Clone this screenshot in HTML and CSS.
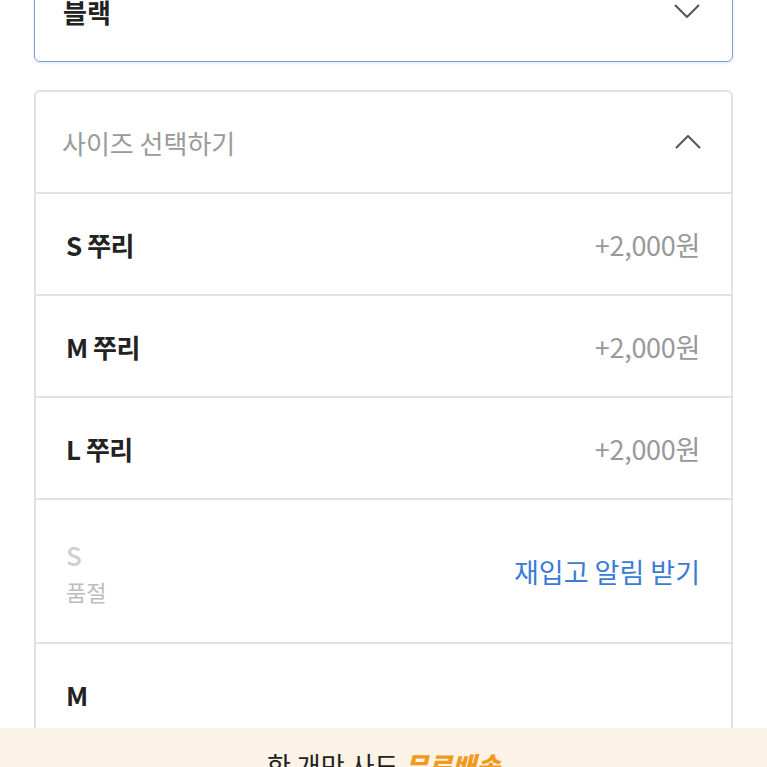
FILE: index.html
```html
<!DOCTYPE html>
<html>
    <head>
    <meta charset="utf-8">
    <link rel="stylesheet" href="styles.css">
    </head>
    <body>
    <div class="container">
        <div class="select picked">
            <span class="value">블랙</span>
            <svg class="chevron" width="26" height="14" viewBox="0 0 26 14"><path d="M1 1 L13 13 L25 1" fill="none" stroke="#555" stroke-width="2"/></svg>
        </div>

        <div class="options">
            <div class="select head">
                <span class="placeholder">사이즈 선택하기</span>
                <svg class="chevron" width="26" height="14" viewBox="0 0 26 14"><path d="M1 13 L13 1 L25 13" fill="none" stroke="#555" stroke-width="2"/></svg>
            </div>
            <div class="row">
                <span class="name">S 쭈리</span>
                <span class="price">+2,000원</span>
            </div>
            <div class="row">
                <span class="name">M 쭈리</span>
                <span class="price">+2,000원</span>
            </div>
            <div class="row">
                <span class="name">L 쭈리</span>
                <span class="price">+2,000원</span>
            </div>
            <div class="row soldout">
                <div class="stack">
                    <span class="name">S</span>
                    <span class="note">품절</span>
                </div>
                <span class="restock">재입고 알림 받기</span>
            </div>
            <div class="row">
                <span class="name">M</span>
            </div>
        </div>
    </div>

    <div class="banner">한 개만 사도 <b>무료배송</b></div>
    </body>
</html>
```

FILE: styles.css
```css
body
{
    margin: 0;
    background: #fff;
    font-family: "Noto Sans CJK KR", "Noto Sans", sans-serif;
    color: #222;
}

.container
{
    padding: 0 34px;
    margin-top: -40px;
}

.select
{
    display: flex;
    align-items: center;
    justify-content: space-between;
    height: 102px;
    padding: 0 32px 0 28px;
    box-sizing: border-box;
}

.picked
{
    border: 1px solid #7c9fd6;
    border-radius: 6px;
    box-shadow: 0 1px 3px rgba(120, 160, 220, 0.25);
    margin-bottom: 28px;
}

.value
{
    font-size: 26px;
    font-weight: 700;
}

.options
{
    border: 2px solid #e2e2e2;
    border-radius: 6px 6px 0 0;
    border-bottom: none;
}

.head
{
    height: 102px;
    padding: 0 30px 0 26px;
    border-bottom: 2px solid #e2e2e2;
}

.placeholder
{
    font-size: 26px;
    color: #9a9a9a;
}

.row
{
    display: flex;
    align-items: center;
    justify-content: space-between;
    height: 100px;
    padding: 0 31px 0 30px;
    border-bottom: 2px solid #e2e2e2;
}

.name
{
    font-size: 26px;
    font-weight: 700;
    letter-spacing: -0.5px;
}

.price
{
    font-size: 27px;
    color: #999;
    letter-spacing: -0.3px;
}

.soldout
{
    height: 142px;
}

.stack
{
    display: flex;
    flex-direction: column;
    gap: 2px;
}

.soldout .name
{
    color: #cfcfcf;
    font-weight: 500;
}

.note
{
    font-size: 22px;
    color: #bdbdbd;
}

.restock
{
    font-size: 27px;
    color: #3b7bd6;
}

.banner
{
    position: fixed;
    left: 0;
    right: 0;
    bottom: 0;
    height: 39px;
    padding-top: 19px;
    box-sizing: border-box;
    overflow: hidden;
    background: #fcf3e7;
    text-align: center;
    font-size: 26px;
    line-height: 36px;
    color: #222;
}

.banner b
{
    color: #f29a1d;
    font-style: italic;
    font-weight: 900;
}
```
